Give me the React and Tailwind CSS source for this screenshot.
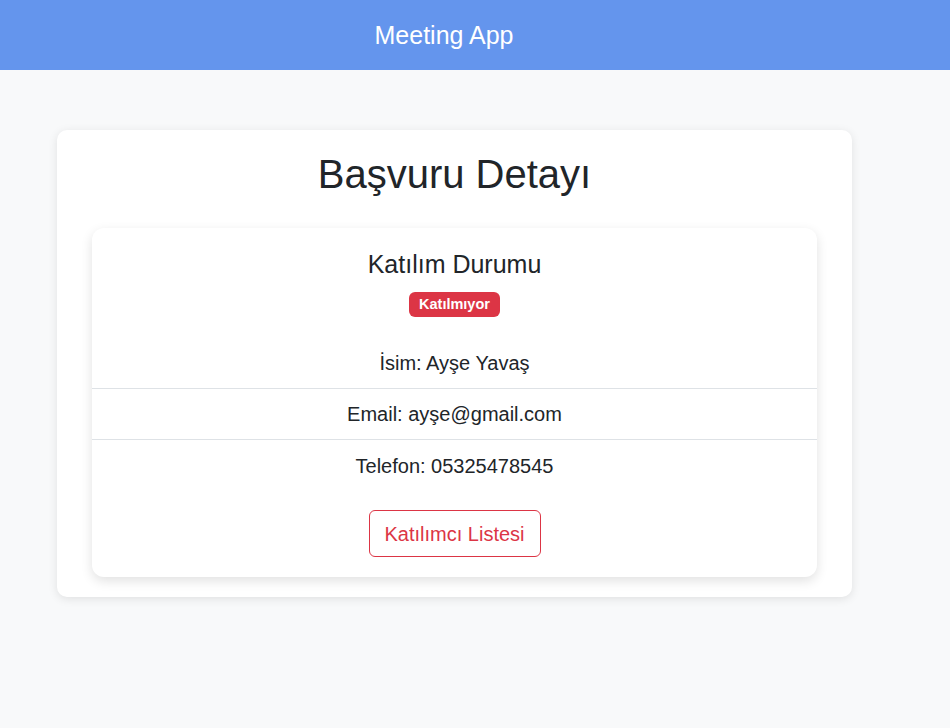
import React from 'react';

const App = () => {
  const rows = ['İsim: Ayşe Yavaş', 'Email: ayşe@gmail.com', 'Telefon: 05325478545'];

  return (
    <div className="min-h-[728px] bg-[#f8f9fa] text-[#212529] font-['Liberation_Sans',Arial,sans-serif]">
      {/* Header */}
      <header className="h-[70px] bg-[#6495ed] flex items-center justify-center pr-[62px]">
        <h1 className="text-[25px] text-white leading-none">Meeting App</h1>
      </header>

      <main className="pt-[60px] pl-[57px]">
        <div className="w-[795px] bg-white rounded-[10px] shadow-[0_2px_10px_rgba(0,0,0,0.1)] pt-[22px] pb-[20px] px-[35px]">
          <h2 className="text-[40px] text-center leading-[44px]">Başvuru Detayı</h2>

          <div className="mt-[32px] bg-white rounded-[12px] shadow-[0_4px_12px_rgba(0,0,0,0.12)] pt-[20px] pb-[20px]">
            <h3 className="text-[25px] text-center leading-[32px]">Katılım Durumu</h3>
            <div className="flex justify-center mt-[12px]">
              <span className="bg-[#dc3545] text-white font-bold text-[14.5px] leading-[25px] px-[10px] rounded-[6px]">
                Katılmıyor
              </span>
            </div>

            <ul className="mt-[21px]">
              {rows.map((r, i) => (
                <li
                  key={r}
                  className={`text-[20px] text-center h-[51px] flex items-center justify-center ${i < rows.length - 1 ? 'border-b border-[#dee2e6]' : ''}`}
                >
                  {r}
                </li>
              ))}
            </ul>

            <div className="flex justify-center mt-[19px]">
              <button className="w-[172px] h-[47px] border border-[#dc3545] text-[#dc3545] text-[20px] rounded-[6px] bg-white">
                Katılımcı Listesi
              </button>
            </div>
          </div>
        </div>
      </main>
    </div>
  );
};

export default App;
